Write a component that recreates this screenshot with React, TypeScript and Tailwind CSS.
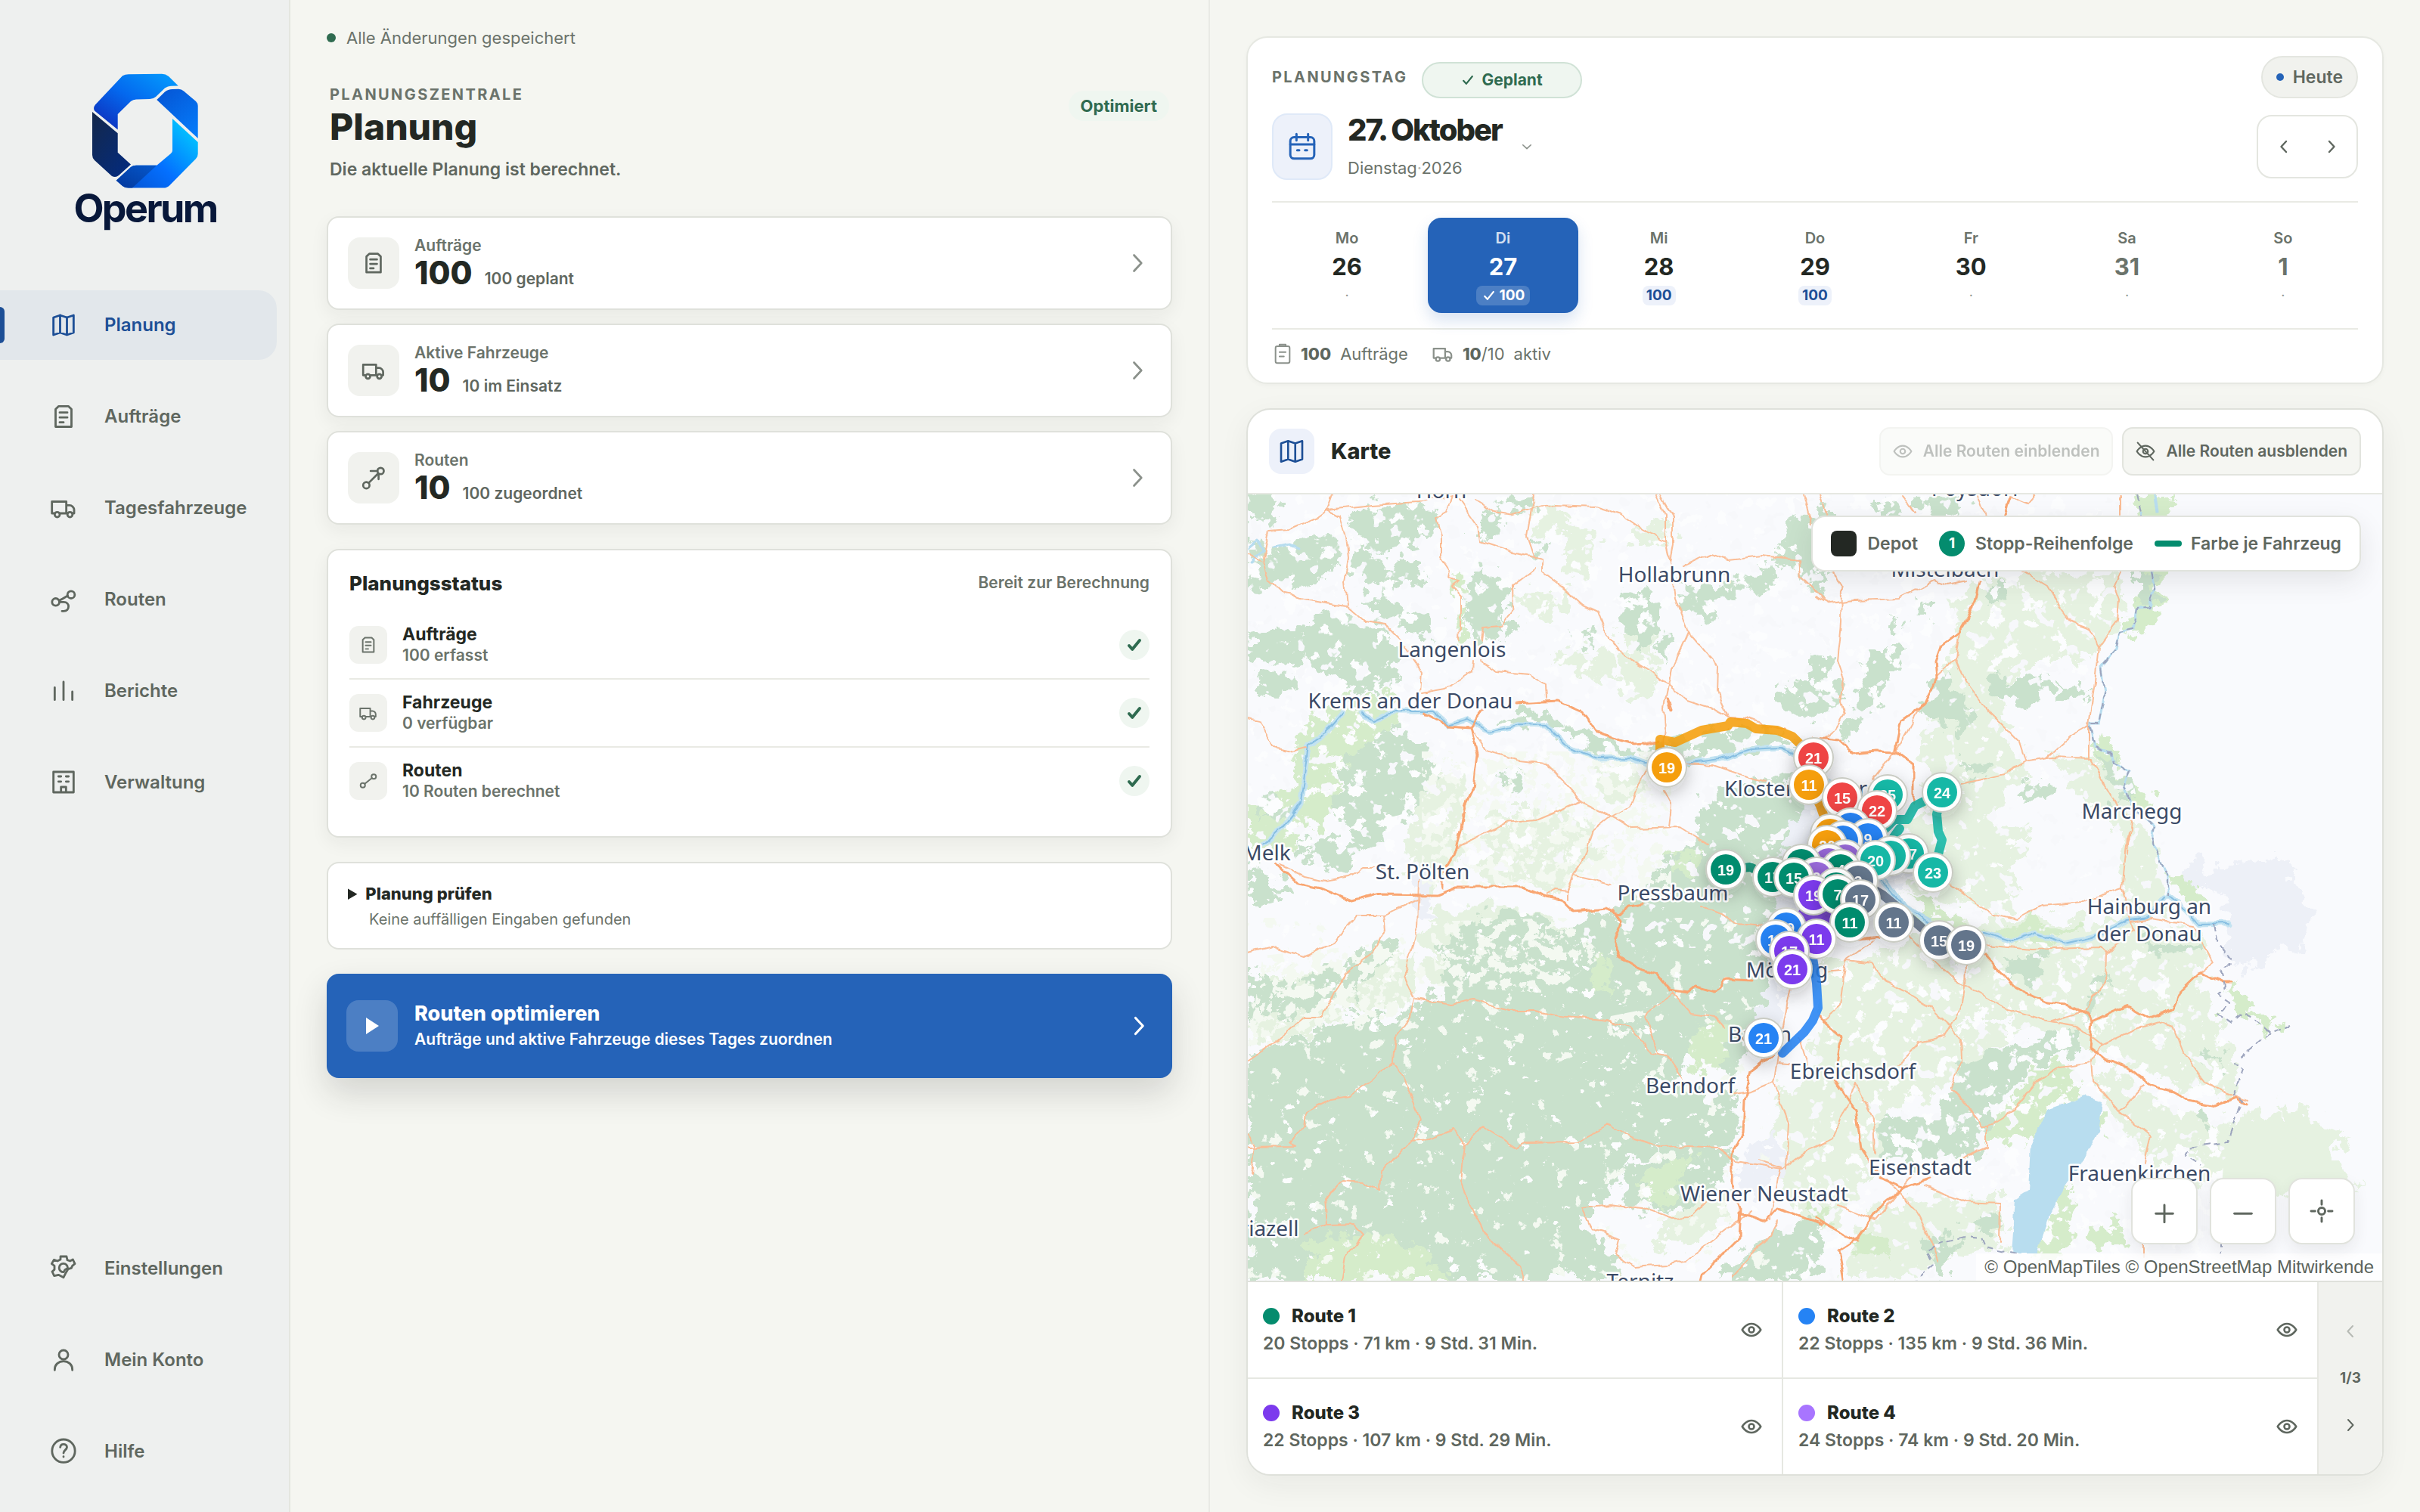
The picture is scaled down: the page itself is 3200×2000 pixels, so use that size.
import { useState } from 'react';
import type { ReactNode } from 'react';

type IconProps = { className?: string; strokeWidth?: number };

function Icon({
  className = 'size-10',
  strokeWidth = 1.7,
  children,
}: IconProps & { children: ReactNode }) {
  return (
    <svg
      viewBox="0 0 24 24"
      className={className}
      fill="none"
      stroke="currentColor"
      strokeWidth={strokeWidth}
      strokeLinecap="round"
      strokeLinejoin="round"
      aria-hidden="true"
    >
      {children}
    </svg>
  );
}

const MapIcon = (props: IconProps) => (
  <Icon {...props}>
    <path d="M4 6 9.3 4.2l5.4 1.8L20 4.2V18l-5.3 1.8L9.3 18 4 19.8zM9.3 4.2V18M14.7 6v13.8" />
  </Icon>
);

const DocIcon = (props: IconProps) => (
  <Icon {...props}>
    <path d="M8.2 3.8h7.6l2.5 2.4v13.9H5.7V6.2zM9 8.8h6M9 12.7h6M9 16.6h3" />
  </Icon>
);

const TruckIcon = (props: IconProps) => (
  <Icon {...props}>
    <path d="M4.8 16.2H2.8V6.9h11.4v9.3H9.2M14.2 9.8h2.6c1.8 0 3.6 1.8 3.6 3.6v2.8h-1M14.8 16.2h-.6" />
    <circle cx="7" cy="17.2" r="2" />
    <circle cx="17.1" cy="17.2" r="2" />
  </Icon>
);

const RoutesIcon = (props: IconProps) => (
  <Icon {...props}>
    <circle cx="5.8" cy="14" r="2.9" />
    <circle cx="18" cy="8.2" r="2.9" />
    <path d="M8.5 12.8c2.8-1.2 4.6-2.4 6.8-3.8M8.8 14h3.4c5 0 5 7.2 0 7.2h-1.4" />
  </Icon>
);

const BarsIcon = (props: IconProps) => (
  <Icon {...props}>
    <path d="M5 19V9.2M12 19V4.8M19 19v-6.4" />
  </Icon>
);

const BuildingIcon = (props: IconProps) => (
  <Icon {...props}>
    <path d="M4 3.6h16v16.2H4zM8 7.2h2M14 7.2h2M8 11.3h2M14 11.3h2M10 19.8v-4.2h4v4.2" />
  </Icon>
);

const GearIcon = (props: IconProps) => (
  <Icon {...props}>
    <path d="M12 19 8 17l-3.4.8L3 14.4l1.8-1.6v-3L2.6 8.2 4.4 5l2.8 1 2.4-1.2v-2.4h4.8l.6 2.8 2.2.8 2.2-1.2L21 8.2l-2 1.6-.8 1.8-2.6.8-2 3.4z" />
    <path d="M15.3 11.4a3.4 3.4 0 1 0-3.3 3.4M15.3 11.6l-2.2 1.4-.9 1.6" />
  </Icon>
);

const UserIcon = (props: IconProps) => (
  <Icon {...props}>
    <circle cx="12" cy="7.8" r="3.6" />
    <path d="M5 20v-.4c0-4 3-6.6 7-6.6s7 2.6 7 6.6v.4" />
  </Icon>
);

const HelpIcon = (props: IconProps) => (
  <Icon {...props}>
    <circle cx="12" cy="11.5" r="9.1" />
    <path d="M9.4 8.6c.2-1.6 1.2-2.4 2.6-2.4s2.7.9 2.7 2.4c0 2-2.7 2.3-2.7 4.6M12 16v.2" />
  </Icon>
);

const RouteTrendIcon = (props: IconProps) => (
  <Icon {...props}>
    <circle cx="5.6" cy="18.6" r="2.8" />
    <circle cx="18.2" cy="6" r="2.8" />
    <path d="M7.6 16.6 16.2 8M9.4 6h6M16.4 8.4v4.8" />
  </Icon>
);

const RouteLineIcon = (props: IconProps) => (
  <Icon {...props}>
    <circle cx="5.8" cy="17" r="2.6" />
    <circle cx="18.2" cy="7" r="2.6" />
    <path d="m8 15.3 8-6.6" />
  </Icon>
);

const CheckIcon = (props: IconProps) => (
  <Icon {...props}>
    <path d="m5 13 4.4 4.8L19 6" />
  </Icon>
);

const EyeIcon = (props: IconProps) => (
  <Icon {...props}>
    <path d="M1.5 12S5.4 5.2 12 5.2 22.5 12 22.5 12 18.6 18.8 12 18.8 1.5 12 1.5 12z" />
    <circle cx="12" cy="12" r="3" />
  </Icon>
);

const EyeOffIcon = (props: IconProps) => (
  <Icon {...props}>
    <path d="M1.5 12S5.4 5.2 12 5.2 22.5 12 22.5 12 18.6 18.8 12 18.8 1.5 12 1.5 12zM2.5 1.5l19 21" />
    <circle cx="12" cy="12" r="3" />
  </Icon>
);

const ChevronRight = (props: IconProps) => (
  <Icon {...props}>
    <path d="m9 5 6.5 7L9 19" />
  </Icon>
);

const ChevronLeft = (props: IconProps) => (
  <Icon {...props}>
    <path d="M15 5 8.5 12l6.5 7" />
  </Icon>
);

const ChevronDown = (props: IconProps) => (
  <Icon {...props}>
    <path d="m5 9 7 6.5L19 9" />
  </Icon>
);

const CalendarIcon = (props: IconProps) => (
  <Icon {...props}>
    <rect x="2.5" y="4.5" width="19" height="17" rx="3" />
    <path d="M2.5 10.2h19M7.4 2v5M16.6 2v5M8 14.8h1.6M14.2 14.8h1.6" />
  </Icon>
);

const ClipboardIcon = (props: IconProps) => (
  <Icon {...props}>
    <rect x="4" y="3.5" width="16" height="19" rx="2" />
    <path d="M8.5 3.5v-2h7v2M8.5 10h7M8.5 15h5" />
  </Icon>
);

const LocateIcon = (props: IconProps) => (
  <Icon {...props}>
    <circle cx="12" cy="12" r="3.4" />
    <path d="M12 1.5v4M12 18.5v4M1.5 12h4M18.5 12h4" />
  </Icon>
);

function Logo() {
  return (
    <div className="flex h-96 flex-col items-center pt-24 pl-0.5">
      <svg viewBox="0 0 144 156" className="h-[156px] w-[144px]" aria-hidden="true">
        <defs>
          <linearGradient id="logoTop" x1="0" y1="1" x2="1" y2="0">
            <stop offset="0" stopColor="#1026b4" />
            <stop offset="0.5" stopColor="#0468ee" />
            <stop offset="1" stopColor="#04a0ff" />
          </linearGradient>
          <linearGradient id="logoRight" x1="0.2" y1="0" x2="0.9" y2="1">
            <stop offset="0" stopColor="#0557d6" />
            <stop offset="1" stopColor="#047cfb" />
          </linearGradient>
          <linearGradient id="logoBottom" x1="0.2" y1="1" x2="1" y2="0.3">
            <stop offset="0" stopColor="#0456d8" />
            <stop offset="0.45" stopColor="#0470ff" />
            <stop offset="1" stopColor="#02c0ff" />
          </linearGradient>
          <linearGradient id="logoFold" x1="0" y1="1" x2="1" y2="0">
            <stop offset="0" stopColor="#03389c" />
            <stop offset="1" stopColor="#0558cc" />
          </linearGradient>
          <linearGradient id="logoLeft" x1="0" y1="0" x2="0.8" y2="1">
            <stop offset="0" stopColor="#14284a" />
            <stop offset="1" stopColor="#042b7c" />
          </linearGradient>
        </defs>
        <path fill="url(#logoTop)" d="M42 4.2Q45.5 2.2 50 2.2L94 1.8Q99 1.8 103 5L115.7 17.4 106 17.8Q102 18 98 20.5L86 32Q83 34.8 78 35L60 35.4Q56 35.6 53 38L35.7 55V75.4L5 50.5Q2.8 46.5 6 42.4z" />
        <path fill="url(#logoRight)" d="M87.3 36 98 25.5Q102 22 108 22L116 21.8Q120 21.8 123 24.5L139 38Q141.7 40.5 141.7 44V87z" />
        <path fill="url(#logoBottom)" d="M108 61 141.7 92V107.5Q141.7 111.5 139 114L104 149.5Q101 152.6 96 152.6H50Q45 152.6 42 150L33.7 142.8 53 125Q56 122.7 60 122.7H87.3L106 107Q108 105.5 108 103z" />
        <path fill="url(#logoFold)" d="M33.7 142.8 53 125Q56 122.7 60 122.7H87.3L55 152.6H50Q45 152.6 42 150z" />
        <path fill="url(#logoLeft)" d="M2 52 35.7 80.3V105.8L53 121.4 37 136Q33 139.5 28 137L5 116Q2 113 2 109z" />
      </svg>
      <p className="text-[52px] leading-[48px] font-bold tracking-tighter text-[#08183a]">Operum</p>
    </div>
  );
}

const mainNav = [
  { label: 'Planung', icon: MapIcon, active: true },
  { label: 'Aufträge', icon: DocIcon },
  { label: 'Tagesfahrzeuge', icon: TruckIcon },
  { label: 'Routen', icon: RoutesIcon },
  { label: 'Berichte', icon: BarsIcon },
  { label: 'Verwaltung', icon: BuildingIcon },
];

const footerNav = [
  { label: 'Einstellungen', icon: GearIcon },
  { label: 'Mein Konto', icon: UserIcon },
  { label: 'Hilfe', icon: HelpIcon },
];

function NavItem({
  label,
  icon: ItemIcon,
  active,
}: {
  label: string;
  icon: (props: IconProps) => ReactNode;
  active?: boolean;
}) {
  return (
    <a
      href={`#${label}`}
      className={`relative mr-4 flex h-[92px] items-center gap-[34px] rounded-r-3xl pl-16 text-2xl font-semibold ${
        active ? 'bg-[#e2e7eb] text-[#1d4f96]' : 'text-[#5f675f]'
      }`}
    >
      {active && <span className="absolute left-0 h-12 w-1.5 rounded-r-md bg-[#1d4f96]" />}
      <ItemIcon />
      {label}
    </a>
  );
}

function Sidebar() {
  return (
    <aside className="flex flex-col border-r-2 border-[#e4e6e0] bg-[#eef0ef] pb-[34px]">
      <Logo />
      <nav className="flex flex-1 flex-col justify-between">
        <div className="flex flex-col gap-[29px]">
          {mainNav.map((item) => (
            <NavItem key={item.label} {...item} />
          ))}
        </div>
        <div className="flex flex-col gap-[29px]">
          {footerNav.map((item) => (
            <NavItem key={item.label} {...item} />
          ))}
        </div>
      </nav>
    </aside>
  );
}

const summaryCards = [
  { title: 'Aufträge', value: '100', note: '100 geplant', icon: DocIcon },
  { title: 'Aktive Fahrzeuge', value: '10', note: '10 im Einsatz', icon: TruckIcon },
  { title: 'Routen', value: '10', note: '100 zugeordnet', icon: RouteTrendIcon },
];

const statusRows = [
  { title: 'Aufträge', note: '100 erfasst', icon: DocIcon },
  { title: 'Fahrzeuge', note: '0 verfügbar', icon: TruckIcon },
  { title: 'Routen', note: '10 Routen berechnet', icon: RouteLineIcon },
];

function PlanningColumn() {
  return (
    <main className="border-r-2 border-[#e9eae5] px-12 pt-8 pb-12">
      <p className="flex h-9 items-center gap-[14px] text-[22px] text-[#6b736b]">
        <span className="size-3 rounded-full bg-[#2f6b50]" />
        Alle Änderungen gespeichert
      </p>

      <header className="mt-[42px] mb-[47px] flex items-start justify-between px-1">
        <div>
          <p className="text-xl leading-[30px] font-bold tracking-[0.12em] text-[#6b736b]">PLANUNGSZENTRALE</p>
          <h1 className="text-5xl leading-[56px] font-extrabold text-[#232823]">Planung</h1>
          <p className="mt-[13px] text-[23px] leading-[30px] font-semibold text-[#5f675f]">
            Die aktuelle Planung ist berechnet.
          </p>
        </div>
        <span className="mt-[10px] flex h-10 items-center rounded-full bg-[#eff6f0] px-4 text-[22px] font-bold text-[#2f6b50]">
          Optimiert
        </span>
      </header>

      <div className="flex flex-col gap-[18px]">
        {summaryCards.map(({ title, value, note, icon: CardIcon }) => (
          <button
            key={title}
            className="flex h-[124px] items-center gap-5 rounded-2xl border-2 border-[#dfe1db] bg-white px-[26px] text-left shadow-[0_8px_24px_rgba(35,40,35,0.06)]"
          >
            <span className="flex size-[68px] items-center justify-center rounded-2xl bg-[#f1f2ee] text-[#5f675f]">
              <CardIcon className="size-9" strokeWidth={1.8} />
            </span>
            <span className="flex-1">
              <span className="block text-[21px] leading-[26px] font-semibold text-[#6b736b]">{title}</span>
              <span className="flex items-baseline gap-4">
                <strong className="text-[42px] leading-[46px] font-extrabold text-[#232823]">{value}</strong>
                <span className="text-[21px] leading-6 font-semibold text-[#5f675f]">{note}</span>
              </span>
            </span>
            <ChevronRight className="size-9 text-[#8b918b]" strokeWidth={1.8} />
          </button>
        ))}
      </div>

      <section className="mt-8 rounded-2xl border-2 border-[#dfe1db] bg-white px-7 pt-[23px] pb-[29px] shadow-[0_8px_24px_rgba(35,40,35,0.06)]">
        <div className="flex h-10 items-center justify-between">
          <h2 className="text-[26px] font-extrabold text-[#232823]">Planungsstatus</h2>
          <span className="text-[21px] font-semibold text-[#6b736b]">Bereit zur Berechnung</span>
        </div>
        <ul className="mt-[18px] divide-y-2 divide-[#e9eae4]">
          {statusRows.map(({ title, note, icon: RowIcon }) => (
            <li key={title} className="flex h-[90px] items-center gap-5 last:h-[88px]">
              <span className="flex size-[50px] items-center justify-center rounded-xl bg-[#f1f2ee] text-[#6b736b]">
                <RowIcon className="size-7" strokeWidth={1.7} />
              </span>
              <div className="flex-1">
                <h3 className="text-[23px] leading-7 font-bold text-[#232823]">{title}</h3>
                <p className="text-[21px] leading-7 font-semibold text-[#6b736b]">{note}</p>
              </div>
              <span className="flex size-10 items-center justify-center rounded-full bg-[#eff6f0] text-[#2f6b50]">
                <CheckIcon className="size-6" strokeWidth={4} />
              </span>
            </li>
          ))}
        </ul>
      </section>

      <details className="mt-8 rounded-2xl border-2 border-[#dfe1db] bg-white px-[26px] pt-[25px] pb-[23px]">
        <summary className="text-[22px] leading-[30px] font-extrabold text-[#232823]">
          Planung prüfen
          <span className="block pt-1 pl-7 text-xl leading-[30px] font-normal text-[#6b736b]">
            Keine auffälligen Eingaben gefunden
          </span>
        </summary>
      </details>

      <button className="mt-8 flex h-[138px] w-full items-center gap-[22px] rounded-2xl bg-[#2563b8] px-[26px] text-left text-white shadow-[0_20px_44px_rgba(35,40,35,0.16)]">
        <span className="flex size-[68px] items-center justify-center rounded-2xl bg-white/18">
          <svg viewBox="0 0 18 22" className="h-[22px] w-[18px]" fill="currentColor" aria-hidden="true">
            <path d="M1 0v22l17-11z" />
          </svg>
        </span>
        <span className="flex-1">
          <span className="block text-[27px] leading-9 font-extrabold">Routen optimieren</span>
          <span className="block text-[21px] leading-8 font-semibold">
            Aufträge und aktive Fahrzeuge dieses Tages zuordnen
          </span>
        </span>
        <ChevronRight className="size-9" strokeWidth={2.1} />
      </button>
    </main>
  );
}

const days = [
  { name: 'Mo', date: 26 },
  { name: 'Di', date: 27, count: 100 },
  { name: 'Mi', date: 28, count: 100 },
  { name: 'Do', date: 29, count: 100 },
  { name: 'Fr', date: 30 },
  { name: 'Sa', date: 31, weekend: true },
  { name: 'So', date: 1, weekend: true },
];

function DayPicker() {
  const [selected, setSelected] = useState(27);

  return (
    <section className="rounded-[28px] border-2 border-[#e6e8e2] bg-white px-8 pt-6 shadow-[0_2px_6px_rgba(35,40,35,0.03)]">
      <div className="flex h-14 items-center">
        <span className="text-xl font-bold tracking-[0.12em] text-[#6b736b]">PLANUNGSTAG</span>
        <span className="ml-[18px] flex h-12 w-[212px] items-center justify-center gap-2 self-end rounded-full border-2 border-[#d0e2d6] bg-[#eff6f0] text-[21px] font-bold text-[#2f6b50]">
          <CheckIcon className="size-5" strokeWidth={2.6} />
          Geplant
        </span>
        <button className="ml-auto flex h-14 items-center gap-3 rounded-full border-2 border-[#e4e6e0] bg-[#f1f2ee] px-[18px] text-[23px] font-semibold text-[#5f675f]">
          <span className="size-[10px] rounded-full bg-[#2563b8]" />
          Heute
        </button>
      </div>

      <div className="mt-5 flex h-[88px] items-center">
        <span className="flex h-[88px] w-20 items-center justify-center rounded-[20px] border-2 border-[#dfe9f8] bg-[#edf1fa] text-[#2563b8]">
          <CalendarIcon className="size-10" strokeWidth={1.8} />
        </span>
        <button className="ml-5 flex items-center gap-6 text-left">
          <span>
            <span className="block text-[40px] leading-[56px] font-extrabold tracking-[-0.05em] text-[#232823]">27. Oktober</span>
            <span className="block text-[22px] leading-[44px] text-[#6b736b]">
              Dienstag<span className="text-[#b9bdb7]">·</span>2026
            </span>
          </span>
          <ChevronDown className="size-[18px] text-[#8b918b]" strokeWidth={2.2} />
        </button>
        <div className="ml-auto flex h-[84px] items-center rounded-[20px] border-2 border-[#e4e6e0] px-0.5 text-[#5f675f]">
          <button aria-label="Vorheriger Tag" className="flex size-[63px] items-center justify-center">
            <ChevronLeft className="size-6" strokeWidth={2.4} />
          </button>
          <button aria-label="Nächster Tag" className="flex size-[63px] items-center justify-center">
            <ChevronRight className="size-6" strokeWidth={2.4} />
          </button>
        </div>
      </div>

      <div className="mt-7 grid grid-cols-7 gap-2 border-y-2 border-[#e9eae4] py-5">
        {days.map((day) => {
          const active = day.date === selected;
          return (
            <button
              key={day.name}
              onClick={() => setSelected(day.date)}
              className={`flex h-[126px] flex-col items-center rounded-[18px] pt-3 ${
                active ? 'bg-[#2563b8] shadow-[0_10px_20px_rgba(37,99,184,0.18)]' : ''
              }`}
            >
              <span className={`text-xl leading-[30px] font-semibold ${active ? 'text-white/80' : 'text-[#6b736b]'}`}>
                {day.name}
              </span>
              <span
                className={`text-[31px] leading-[46px] font-bold ${
                  active ? 'text-white' : day.weekend ? 'text-[#6b736b]' : 'text-[#232823]'
                }`}
              >
                {day.date}
              </span>
              {day.count ? (
                <span
                  className={`mt-0.5 flex h-[26px] items-center gap-1 rounded-lg text-[19px] font-bold ${
                    active ? 'bg-white/18 px-[7px] text-white' : 'bg-[#edf1fa] px-[5px] text-[#1d4f96]'
                  }`}
                >
                  {active && <CheckIcon className="size-5" strokeWidth={2.6} />}
                  {day.count}
                </span>
              ) : (
                <span className="mt-0.5 text-lg leading-[26px] text-[#8b918b]">·</span>
              )}
            </button>
          );
        })}
      </div>

      <div className="flex h-[70px] items-center pb-1.5 text-[22px] text-[#6b736b]">
        <ClipboardIcon className="size-7 text-[#8b918b]" strokeWidth={1.7} />
        <strong className="ml-[10px] font-extrabold text-[#5f675f]">100</strong>
        <span className="ml-3">Aufträge</span>
        <TruckIcon className="ml-[30px] size-8 text-[#8b918b]" strokeWidth={1.7} />
        <span className="ml-[10px]">
          <strong className="font-extrabold text-[#5f675f]">10</strong>/10
        </span>
        <span className="ml-3">aktiv</span>
      </div>
    </section>
  );
}

// Terrain, coordinates in map pixels (1500 x 1040)
const lightFields = [
  '375,10 405,8 425,35 460,60 450,112 420,105 420,50 375,45',
  '510,35 555,33 562,75 510,68',
  '355,136 390,117 425,125 430,163 360,160',
  '490,175 530,170 545,270 495,270',
  '415,200 480,210 495,250 455,245 405,220',
  '944,120 1020,105 1153,100 1155,170 1110,220 1035,220 990,260 1000,310 1035,370 960,440 900,450 890,340 915,240 935,200',
  '850,440 960,420 1030,440 1010,500 1015,550 940,545 880,520',
  '1060,340 1120,350 1170,410 1200,470 1215,560 1150,545 1160,450 1110,420',
  '980,560 1060,560 1160,560 1270,590 1260,640 1290,720 1310,760 1290,800 1200,770 1120,740 1040,700 960,690 900,720 820,760 760,690 750,620 850,600',
  '1130,760 1200,800 1300,830 1290,855 1240,865 1200,900 1170,850 1130,800',
  '1305,830 1340,810 1420,860 1470,905 1440,930 1380,920 1345,950 1280,930 1245,875',
  '1360,805 1450,840 1440,880 1390,860',
  '760,700 900,700 1030,700 950,760 840,820 830,890 790,960 740,980 700,900 720,830',
  '830,940 990,930 1000,1000 920,1010 860,1040 790,1040 800,980',
  '220,380 290,370 285,470 250,525 215,500',
  '320,420 440,420 470,480 400,525 300,505',
  '230,560 330,540 430,570 470,620 410,650 330,625 240,650',
  '30,640 130,620 220,600 215,680 130,680 60,720 0,720',
  '450,360 510,355 530,390 480,410',
  '700,790 740,780 720,850 690,860',
  '600,890 640,940 600,990 540,1000 560,950',
];

const forests = [
  '0,60 30,70 60,55 110,50 120,85 100,110 60,125 30,115 0,130',
  '0,0 25,0 40,30 15,40 0,35',
  '145,15 200,12 240,20 262,35 240,60 200,65 175,75 150,60 135,45',
  '135,75 160,70 180,90 225,85 235,110 200,125 165,120 140,110',
  '305,25 340,20 330,50 305,60',
  '345,12 375,8 370,24 350,26',
  '290,125 310,95 335,110 345,150 330,190 300,200 290,160',
  '150,130 190,135 230,160 245,190 210,180 165,160',
  '0,190 60,175 120,160 190,180 203,240 190,265 140,255 100,230 50,225 0,215',
  '20,240 60,235 55,262 10,268',
  '378,50 402,62 386,85',
  '345,160 360,180 340,192',
  '565,120 640,112 700,90 700,118 650,130 600,165 575,150',
  '690,70 740,25 770,15 770,112 735,120 700,90',
  '500,130 530,125 540,180 520,205 505,180 495,150',
  '545,180 558,190 552,230 542,200',
  '425,180 465,190 460,198 430,195',
  '700,255 760,240 790,250 780,280 740,300 710,280',
  '330,295 365,285 400,290 440,305 465,325 520,337 560,330 620,312 700,310 732,330 700,330 660,333 600,350 550,354 470,343 425,318 380,298 330,305',
  '140,340 190,310 240,330 250,380 220,420 180,450 150,476 130,430 110,400',
  '20,395 55,410 60,440 25,430',
  '330,370 370,375 360,390 335,388',
  '60,470 110,455 150,470 130,500 90,490',
  '0,490 35,500 50,530 20,540 0,530',
  '600,405 650,385 700,372 745,395 750,440 745,520 705,560 690,600 688,660 665,730 645,765 600,740 560,765 470,690 430,610 400,580 490,545 540,500 590,460',
  '0,740 60,720 130,690 215,690 260,650 250,600 300,560 360,550 430,580 500,600 560,660 560,760 600,790 645,800 650,850 600,870 560,860 500,880 470,940 440,960 490,1010 480,1040 0,1040',
  '0,630 60,650 110,620 180,590 200,600 130,670 50,690 0,690',
  '570,850 640,870 620,920 560,950 500,940 490,900',
  '690,985 750,960 770,1000 750,1040 620,1040 650,1010',
  '939,758 969,740 1030,723 1076,705 1107,719 1102,738 1056,742 1025,774 980,810 975,865 928,877 877,885 832,873 834,818 862,829 918,826 928,798',
  '816,205 872,205 847,243 832,278 801,320 791,305 811,259',
  '913,240 960,278 944,312 888,289',
  '975,243 1051,240 1066,266 1025,278 980,259',
  '1066,244 1115,266 1076,268',
  '964,125 1005,113 1013,144 985,140',
  '888,5 944,8 949,30 893,30',
  '830,8 855,5 860,25 840,28',
  '888,144 900,140 895,165 880,165',
  '845,158 870,175 860,182',
  '750,105 772,112 765,130 750,125',
  '750,215 772,210 765,260 750,275',
  '1000,612 1056,606 1051,640 1005,636',
  '1020,380 1060,378 1055,400 1025,410',
  '1178,90 1205,100 1200,145 1178,140',
  '1120,338 1150,360 1170,400 1158,410 1135,370',
  '945,360 975,355 980,370 955,380',
  '1180,590 1250,592 1262,605 1200,608',
  '1095,700 1125,640 1140,640 1115,690',
  '1260,730 1285,735 1290,755 1265,752',
  '1255,805 1280,825 1275,840 1255,825',
  '900,985 940,980 935,1010 915,1035 900,1010',
  '965,950 990,945 985,980 970,980',
];

const parks = [
  '0,410 60,390 65,330 100,275 150,262 190,268 200,290 165,350 120,362 110,420 60,470 0,476',
  '268,100 285,110 290,190 278,200 275,140',
  '600,720 630,690 645,740 620,765 590,755',
  '1056,746 1092,762 1102,798 1056,810 1046,849 975,865 964,841 1005,810',
  '1087,912 1095,960 1082,1006 1042,1006 1056,960',
  '1176,0 1218,0 1217,70 1205,150 1170,190 1155,185 1176,140 1185,60',
  '1120,320 1150,340 1160,380 1205,405 1190,425 1150,390 1118,345',
  '1218,500 1255,500 1265,545 1240,540 1220,520',
  '1303,642 1316,665 1360,699 1350,712 1334,697 1316,687 1301,697 1290,685',
  '870,520 900,535 960,580 1040,565 1110,575 1060,590 980,585 900,575',
  '640,470 700,480 700,540 650,520',
  '1110,970 1150,955 1160,990 1120,1000',
  '790,990 830,975 860,1000 830,1015',
  '750,930 775,940 760,965 740,950',
  '1125,815 1138,820 1130,845 1118,835',
];

// nature reserves that lie on top of the woods
const reserves = [
  '75,1000 110,975 220,988 265,1040 75,1040',
  '550,880 592,868 570,935 520,945 515,915',
  '456,615 482,622 474,662 450,640',
  '592,700 630,690 645,725 615,760 588,752',
  '560,480 600,475 590,500 565,498',
];

const urban = [
  '740,400 800,420 860,440 870,520 820,560 740,600 690,640 690,560 710,470',
  '1230,490 1291,493 1342,478 1378,478 1378,513 1408,553 1393,604 1352,608 1321,628 1291,604 1306,565 1291,529 1240,509',
  '215,500 245,500 240,560 220,550',
  '660,860 700,850 710,900 670,930 650,900',
  '690,650 710,640 700,700 670,740 660,730',
];

const lake =
  'M1056 814 1107 796 1130 804 1125 841 1102 885 1077 920 1056 960 1043 1005H1010L1015 932 1033 920 1036 861 1051 826z';

const rivers = [
  'M0 480 17 467 45 439 70 408 75 370 80 331 102 316 125 289M152 289 165 301 195 287 245 287 265 305 290 297 320 314 360 305 395 306 425 335 462 350 505 349 525 356 580 356 625 350 665 337 705 335 725 345 790 400 820 480 840 513 863 539 900 566 940 580 974 580 1010 592 1041 580 1082 594 1117 586 1163 563 1189 559 1212 533M1217 531 1240 549 1260 569 1298 568',
];

const creeks = [
  'M842 505 870 545 902 562M1199 0 1202 25M1181 25 1199 125 1191 150 1176 151 1171 178 1153 182 1148 205 1128 228 1133 262 1125 303 1113 303 1120 335 1140 341 1143 354 1166 368 1158 385 1168 412 1199 439 1196 461 1201 470 1217 505 1217 531',
  'M0 70 12 60 20 75 5 90M35 70 55 66 70 72',
];

const borders = [
  'M1176 0 1181 25 1199 125 1191 150 1176 151 1171 178 1153 182 1148 205 1128 228 1133 262 1125 303 1113 303 1120 335 1140 341 1143 354 1166 368 1158 385 1168 412 1199 439 1196 461 1201 470 1217 505 1217 531',
  'M1278 569 1283 596 1301 612 1298 624 1288 632 1293 650 1283 661 1298 671 1283 687 1301 699 1316 687 1334 697 1352 712 1378 701M1352 712 1304 752 1316 762 1304 794 1316 802 1306 826 1296 857 1245 864 1241 875 1260 887M1271 930 1286 980 1286 1005',
  'M1015 1005 974 996 969 984 949 982 908 992 898 1003 906 1019 883 1039',
];

const minorRoads = [
  'M112 0 105 20 90 31 55 46 28 48 20 90 28 113 48 132 85 140 130 147 155 169 183 173 200 190 230 234 228 262',
  'M105 20 165 14 225 10 270 2M105 20 122 29 130 56 133 83 128 117 131 146M0 78 20 90',
  'M270 2 262 23 248 31 255 56 255 83 268 102 266 112 280 115 270 122 282 135 282 152 280 194',
  'M280 8 305 44 308 63 350 77 390 86 390 102 415 121 443 146 462 155 472 182 495 211 530 232 555 251 580 272 610 282 634 295',
  'M300 8 325 23 350 27 380 16 405 14 460 16 495 27 520 44 552 62M378 0 369 56 379 85',
  'M380 98 350 121 351 153 335 174 310 176 308 194M308 220 330 234 370 238 395 253 396 270M298 220 297 236 260 257 232 262',
  'M540 0 552 25 552 62 558 88M545 0 562 29 562 67 558 88 565 136 582 182 605 209 622 228 621 259 634 295',
  'M582 182 560 232 550 282 552 310 550 331M575 96 612 79 635 86 680 81 730 86 732 109 762 138',
  'M750 134 770 144 801 140 862 138 908 115 925 120 951 115M735 0 745 40M775 102 786 125 785 171 780 220 788 243 783 274 788 291 775 312 763 322',
  'M865 0 882 25M757 0 766 28M965 0 975 28M1008 3 1030 12 1040 0M1155 0 1155 28',
  'M941 182 936 216 949 247 982 289 1020 327 1028 352M857 337 820 385M935 218 911 240M890 280 857 340',
  'M944 383 1000 370 1031 352 1064 347 1115 349 1133 383 1150 412 1168 431 1164 475 1164 446 1156 521',
  'M1056 348 1087 320 1112 306 1120 247 1125 201 1150 167 1152 140 1145 121 1153 102M1025 102 1056 121 1069 144 1087 169 1112 178 1125 201M1112 306 1112 349',
  'M300 316 315 339 360 352 395 356 415 377 442 408 480 426 510 442 570 440 610 465M275 467 340 435 380 431 440 406',
  'M480 426 505 412 517 381 530 358M480 426 455 446 445 476 432 505 424 522 424 536M550 393 560 412 557 439M432 505 480 516',
  'M580 356 615 358 650 370 685 380M636 295 660 296 680 304 710 312',
  'M0 297 15 300 35 335 60 341 78 336',
  'M45 490 75 505 102 511 135 505 152 494 180 494M227 511 225 572 215 611 207 637 220 666 215 691 195 718 192 749 215 791 228 829 215 856 195 879 177 894 175 921 150 909 125 907 102 932 105 967 75 978',
  'M225 536 180 557 145 557 115 592 75 611 32 598 0 606M180 557 182 576 165 607 130 634 115 657 97 691 75 691 40 722 0 749',
  'M222 666 267 674 300 668 345 683 380 683 405 689 475 697 507 705 532 739 555 743 575 772M562 659 537 676 525 691 542 739M562 659 587 687 617 691 630 706',
  'M192 749 165 775 135 796 110 800 77 817 75 837 57 858 62 862 0 863M0 845 10 860 5 900',
  'M215 854 240 852 272 840 287 862 282 909 295 944 310 975 335 998 360 1021 365 1040M287 862 310 836 355 864 367 858 435 857 477 833 510 852 547 864 585 862 620 864 645 883 707 892 735 871 764 858',
  'M105 967 140 966 152 979 130 1009 125 1040M442 944 480 940 530 946 562 957 585 956 605 936M442 944 455 971 492 986 487 1007 510 1022 555 1019 580 1013 665 948',
  'M600 545 625 555 645 568 680 571M395 532 405 522 424 524M640 795 665 790 695 778 705 720 720 640',
  'M929 515 959 537 987 555 1018 562 1051 544 1102 539 1156 521 1171 576 1135 606 1134 644 1115 667 1107 683 1061 697',
  'M974 596 1036 602 1128 599 1135 606M1168 565 1194 561 1250 569 1276 620 1260 632',
  'M875 584 934 644 954 652 1000 679 1061 697 1097 703 1130 728 1115 750 1117 774 1153 816 1194 849 1186 883M1153 816 1184 781',
  'M1130 728 1173 707 1209 697 1224 705 1237 739 1265 778 1321 802',
  'M949 620 948 652 944 679 929 703 921 717 888 725 860 754M929 703 943 723 944 748 929 786 954 810 969 836 977 836 1010 816 1041 778 1074 758 1115 752M977 836 977 863 946 877',
  'M827 590 791 616 827 620 842 644 878 663 903 679 929 703M791 616 783 675 760 695M760 632 785 630',
  'M804 778 827 826 829 873M804 778 788 818 773 853 750 865M695 778 715 830 712 892M675 880 705 890 690 960',
  'M895 915 918 924 949 936 995 938 994 988M845 905 883 948 903 988 913 1015M780 940 830 960 880 900',
  'M640 1035 690 980 700 960M1184 992V1010',
  'M550 331 550 345M702 752 740 755 730 720',
];

const majorRoads = [
  'M967 113 959 151 941 182 916 201 909 220 911 243 895 278 865 299 857 337M1008 5 1000 28',
  'M750 322 781 325 801 343 830 340 857 341 880 358 880 408M355 276 410 273 442 287 462 316 510 330 545 327',
  'M233 289 265 306 295 308 303 343 298 389 287 412 282 442 272 476 257 500 257 520M312 285 295 308',
  'M38 488 67 515 97 521 137 538 175 528 250 529 275 519 365 519 395 532 415 536 432 553 472 549 492 555 502 545 522 542',
  'M485 551 493 565 484 588 492 612 515 626 540 634 557 655 582 659 592 651 617 658 632 641 665 643',
  'M695 741 665 764 657 802 655 844 640 875 640 910 652 944 650 982 600 1032 598 1040',
  'M974 608 1015 652 1056 672 1082 675 1112 687 1116 697 1113 731 1133 748 1163 758 1194 782 1224 790 1245 802 1278 809 1306 798 1320 807',
  'M1116 697 1133 689 1163 677 1191 693 1224 681 1235 656 1260 632 1291 645 1301 645',
  'M755 691 785 717 775 774 804 814 811 865 837 903 867 917 903 905M867 917 834 944 806 984 781 1000 788 1039M750 956 806 988',
  'M650 950 685 962 700 945 760 965M790 590 835 585M555 270 560 285',
];

const places = [
  { name: 'Horn', x: 256, y: 5 },
  { name: 'Poysdorf', x: 962, y: 2 },
  { name: 'Mistelbach', x: 922, y: 109 },
  { name: 'Hollabrunn', x: 564, y: 116 },
  { name: 'Langenlois', x: 270, y: 215 },
  { name: 'Krems an der Donau', x: 215, y: 283 },
  { name: 'Klosterneuburg', x: 733, y: 399 },
  { name: 'Marchegg', x: 1169, y: 429 },
  { name: 'Melk', x: 25, y: 484 },
  { name: 'St. Pölten', x: 231, y: 509 },
  { name: 'Pressbaum', x: 562, y: 537 },
  { name: 'Hainburg an', x: 1192, y: 555 },
  { name: 'der Donau', x: 1192, y: 591 },
  { name: 'Mödling', x: 713, y: 639 },
  { name: 'Baden', x: 677, y: 724 },
  { name: 'Ebreichsdorf', x: 800, y: 773 },
  { name: 'Berndorf', x: 585, y: 792 },
  { name: 'Eisenstadt', x: 889, y: 900 },
  { name: 'Frauenkirchen', x: 1179, y: 908 },
  { name: 'Wiener Neustadt', x: 683, y: 935 },
  { name: 'Mariazell', x: 8, y: 981 },
  { name: 'Ternitz', x: 519, y: 1051 },
];

const GREEN = '#048c6e';
const BLUE = '#2583f4';
const VIOLET = '#7c3aed';
const LILAC = '#9a6adb';
const ORANGE = '#f59e0b';
const RED = '#ef4444';
const TEAL = '#14b8a6';
const SLATE = '#64748b';

const tracks = [
  { color: ORANGE, d: 'M545 340V324L565 328 600 312 635 306 638 301 660 303 672 310 700 312 720 320 733 333 748 348M742 384 757 412 770 449' },
  { color: TEAL, d: 'M918 394 882 412 872 430 855 430 835 450 830 484M832 484 862 442M918 394 911 423 913 446 918 457 913 476 906 500' },
  { color: GREEN, d: 'M632 496 664 493 694 506 722 507 780 529 796 566' },
  { color: SLATE, d: 'M807 511 840 530 870 555 892 574 914 590' },
  { color: VIOLET, d: 'M748 530 730 560 752 560 775 555 752 588' },
  { color: BLUE, d: 'M745 600 752 646 754 679 747 696 736 711 707 739' },
];

const stops = [
  { n: 21, x: 748, y: 348, color: RED },
  { n: 19, x: 554, y: 361, color: ORANGE },
  { n: 11, x: 742, y: 384, color: ORANGE },
  { n: 24, x: 918, y: 394, color: TEAL },
  { n: 25, x: 846, y: 397, color: TEAL },
  { n: 15, x: 786, y: 401, color: RED },
  { n: 22, x: 832, y: 418, color: RED },
  { n: 5, x: 797, y: 441, color: BLUE },
  { n: 3, x: 770, y: 449, color: ORANGE },
  { n: 9, x: 820, y: 455, color: BLUE },
  { n: 1, x: 787, y: 458, color: BLUE },
  { n: 20, x: 766, y: 464, color: ORANGE },
  { n: 17, x: 874, y: 475, color: TEAL },
  { n: 1, x: 850, y: 478, color: TEAL },
  { n: 8, x: 790, y: 483, color: LILAC },
  { n: 20, x: 830, y: 484, color: TEAL },
  { n: 6, x: 768, y: 488, color: LILAC },
  { n: 3, x: 732, y: 489, color: GREEN },
  { n: 4, x: 784, y: 496, color: GREEN },
  { n: 19, x: 632, y: 496, color: GREEN },
  { n: 23, x: 906, y: 500, color: TEAL },
  { n: 2, x: 752, y: 506, color: LILAC },
  { n: 17, x: 694, y: 506, color: GREEN },
  { n: 15, x: 722, y: 507, color: GREEN },
  { n: 3, x: 807, y: 511, color: SLATE },
  { n: 5, x: 778, y: 520, color: GREEN },
  { n: 19, x: 748, y: 530, color: VIOLET },
  { n: 7, x: 780, y: 529, color: GREEN },
  { n: 17, x: 810, y: 536, color: SLATE },
  { n: 11, x: 796, y: 566, color: GREEN },
  { n: 11, x: 854, y: 566, color: SLATE },
  { n: 19, x: 712, y: 573, color: BLUE },
  { n: 11, x: 752, y: 588, color: VIOLET },
  { n: 17, x: 698, y: 589, color: BLUE },
  { n: 15, x: 914, y: 590, color: SLATE },
  { n: 19, x: 950, y: 596, color: SLATE },
  { n: 17, x: 716, y: 604, color: VIOLET },
  { n: 21, x: 720, y: 628, color: VIOLET },
  { n: 21, x: 682, y: 719, color: BLUE },
];

function RouteMap() {
  return (
    <svg
      viewBox="0 0 1500 1040"
      preserveAspectRatio="xMidYMid slice"
      className="absolute inset-0 size-full bg-[#f9fafd]"
      role="img"
      aria-label="Karte mit Routen und Stopps"
    >
      <defs>
        {/* frays polygon outlines so woods and fields look surveyed */}
        <filter id="fray" x="0" y="0" width="1500" height="1040" filterUnits="userSpaceOnUse">
          <feTurbulence type="fractalNoise" baseFrequency="0.045" numOctaves="5" seed="4" result="noise" />
          <feDisplacementMap in="SourceGraphic" in2="noise" scale="50" xChannelSelector="R" yChannelSelector="G" />
        </filter>
        <filter id="wobble" x="0" y="0" width="1500" height="1040" filterUnits="userSpaceOnUse">
          <feTurbulence type="fractalNoise" baseFrequency="0.05" numOctaves="2" seed="9" result="noise" />
          <feDisplacementMap in="SourceGraphic" in2="noise" scale="9" xChannelSelector="R" yChannelSelector="G" />
        </filter>
        {/* each one keeps only the peaks of its noise */}
        <filter id="clearings" x="0" y="0" width="1500" height="1040" filterUnits="userSpaceOnUse">
          <feTurbulence type="fractalNoise" baseFrequency="0.045" numOctaves="6" seed="21" />
          <feColorMatrix values="0 0 0 0 0.976  0 0 0 0 0.98  0 0 0 0 0.992  30 0 0 0 -18.6" result="spots" />
          <feComposite in="spots" in2="SourceGraphic" operator="in" />
        </filter>
        <filter id="glades" x="0" y="0" width="1500" height="1040" filterUnits="userSpaceOnUse">
          <feTurbulence type="fractalNoise" baseFrequency="0.05 0.06" numOctaves="6" seed="7" />
          <feColorMatrix values="0 0 0 0 0.976  0 0 0 0 0.98  0 0 0 0 0.992  30 0 0 0 -21.4" result="spots" />
          <feComposite in="spots" in2="SourceGraphic" operator="in" />
        </filter>
        <filter id="meadows" x="0" y="0" width="1500" height="1040" filterUnits="userSpaceOnUse">
          <feTurbulence type="fractalNoise" baseFrequency="0.045" numOctaves="6" seed="33" />
          <feColorMatrix values="0 0 0 0 0.902  0 0 0 0 0.949  0 0 0 0 0.882  0 30 0 0 -20.4" result="spots" />
          <feComposite in="spots" in2="SourceGraphic" operator="in" />
        </filter>
        <filter id="mosaic" x="0" y="0" width="1500" height="1040" filterUnits="userSpaceOnUse">
          <feTurbulence type="fractalNoise" baseFrequency="0.06" numOctaves="5" seed="52" />
          <feColorMatrix values="0 0 0 0 0.902  0 0 0 0 0.949  0 0 0 0 0.882  0 30 0 0 -15.6" result="spots" />
          <feComposite in="spots" in2="SourceGraphic" operator="in" />
        </filter>
        <filter id="hamlets" x="0" y="0" width="1500" height="1040" filterUnits="userSpaceOnUse">
          <feTurbulence type="fractalNoise" baseFrequency="0.05" numOctaves="3" seed="12" />
          <feColorMatrix values="0 0 0 0 0.929  0 0 0 0 0.941  0 0 0 0 0.969  0 0 30 0 -19.4" result="spots" />
          <feComposite in="spots" in2="SourceGraphic" operator="in" />
        </filter>
        <filter id="pinShadow" x="-100%" y="-100%" width="300%" height="320%">
          <feDropShadow dx="0" dy="8" stdDeviation="11" floodColor="#232823" floodOpacity="0.24" />
        </filter>
      </defs>

      <g filter="url(#fray)">
        {lightFields.map((points) => (
          <polygon key={points} points={points} fill="#e6f2e1" />
        ))}
        {parks.map((points) => (
          <polygon key={points} points={points} fill="#d5ecca" />
        ))}
        {forests.map((points) => (
          <polygon key={points} points={points} fill="#c9e1cc" />
        ))}
        {reserves.map((points) => (
          <polygon key={points} points={points} fill="#d5ecca" />
        ))}
        {urban.map((points) => (
          <polygon key={points} points={points} fill="#edf0f7" />
        ))}
      </g>
      <path d="M0 560H690V1040H0z" filter="url(#meadows)" />
      <path d="M240 565 420 560 470 610 400 660 250 650zM20 610 210 590 200 690 0 730zM480 690 530 680 520 720 470 720zM230 340H560V520H230z" filter="url(#mosaic)" />
      <path d="M0 0H1170L1120 240 870 230 800 350H560L420 500H0V300L60 260 0 150zM760 600 1000 590 1210 600 1300 730 1280 1040H1100L1000 930 830 930 760 1040H700L760 780z" filter="url(#clearings)" />
      <path d="M420 500 560 350H900L1140 240 1210 560 830 560 690 640 700 1040H0V500z" filter="url(#glades)" />
      <path d="M0 0H1170L1120 300 1210 450 1300 800 1280 1040H700V600H440V500H0z" filter="url(#hamlets)" />
      <path d={lake} fill="#b8ddef" filter="url(#wobble)" />

      <g fill="none" strokeLinejoin="round" strokeLinecap="round" filter="url(#wobble)">
        {rivers.map((d) => (
          <g key={d}>
            <path d={d} stroke="#c3e3f1" strokeWidth="7" />
            <path d={d} stroke="#88bfe2" strokeWidth="2" />
          </g>
        ))}
        {creeks.map((d) => (
          <path key={d} d={d} stroke="#b8ddef" strokeWidth="3" />
        ))}
        {minorRoads.map((d) => (
          <path key={d} d={d} stroke="#fabd96" strokeWidth="2" />
        ))}
        {majorRoads.map((d) => (
          <path key={d} d={d} stroke="#f9a672" strokeWidth="3" />
        ))}
        {borders.map((d) => (
          <path key={d} d={d} stroke="#9ca4bd" strokeWidth="2" strokeDasharray="9 6" strokeLinecap="butt" />
        ))}
      </g>

      <g
        fontFamily="'Noto Sans', sans-serif"
        fontSize="28"
        textAnchor="middle"
        fill="#3b4a66"
        stroke="#fff"
        strokeWidth="5"
        strokeLinejoin="round"
        paintOrder="stroke"
      >
        {places.map(({ name, x, y }) => (
          <text key={name} x={x} y={y}>
            {name}
          </text>
        ))}
      </g>

      <g fill="none" strokeWidth="12" strokeLinejoin="round" strokeLinecap="round" opacity="0.88">
        {tracks.map(({ color, d }) => (
          <path key={color} d={d} stroke={color} />
        ))}
      </g>

      <g fontFamily="'Liberation Sans', Arial, sans-serif" fontSize="20" fontWeight="700" textAnchor="middle">
        {stops.map(({ n, x, y, color }) => (
          <g key={`${x}-${y}`} filter="url(#pinShadow)">
            <circle cx={x} cy={y} r="26" fill="#fff" stroke="#c9cbc3" strokeWidth="2" />
            <circle cx={x} cy={y} r="20" fill={color} />
            <text x={x} y={y + 8} fill="#fff">
              {n}
            </text>
          </g>
        ))}
      </g>
    </svg>
  );
}

const routes = [
  { name: 'Route 1', info: '20 Stopps · 71 km · 9 Std. 31 Min.', dot: 'bg-[#048c6e]' },
  { name: 'Route 2', info: '22 Stopps · 135 km · 9 Std. 36 Min.', dot: 'bg-[#2583f4]' },
  { name: 'Route 3', info: '22 Stopps · 107 km · 9 Std. 29 Min.', dot: 'bg-[#7c3aed]' },
  { name: 'Route 4', info: '24 Stopps · 74 km · 9 Std. 20 Min.', dot: 'bg-[#a875ff]' },
];

const mapButton =
  'flex size-[88px] items-center justify-center rounded-[18px] border-2 border-[#e1e3dd] bg-white text-[#5f675f] shadow-[0_8px_20px_rgba(35,40,35,0.08)]';

function MapPanel() {
  return (
    <section className="flex flex-1 flex-col overflow-hidden rounded-[32px] border-2 border-[#dfe1db] bg-white shadow-[0_12px_40px_rgba(35,40,35,0.06)]">
      <div className="flex h-28 items-center gap-3 border-b-2 border-[#e6e8e2] px-7">
        <span className="flex size-[60px] items-center justify-center rounded-2xl bg-[#edf1fa] text-[#1d4f96]">
          <MapIcon className="size-[42px]" strokeWidth={1.5} />
        </span>
        <h2 className="mr-auto ml-[10px] text-[29px] font-extrabold text-[#232823]">Karte</h2>
        <button
          disabled
          className="flex h-16 items-center gap-[14px] rounded-[14px] border-2 border-[#e2e4de] bg-[#f5f6f2] px-4 text-[21px] font-semibold text-[#5f675f] opacity-40"
        >
          <EyeIcon className="size-[26px]" strokeWidth={2} />
          Alle Routen einblenden
        </button>
        <button className="flex h-16 items-center gap-[14px] rounded-[14px] border-2 border-[#e2e4de] bg-[#f5f6f2] px-4 text-[21px] font-semibold text-[#5f675f]">
          <EyeOffIcon className="size-[26px]" strokeWidth={2} />
          Alle Routen ausblenden
        </button>
      </div>

      <div className="relative min-h-[600px] flex-1 overflow-hidden">
        <RouteMap />
        <div className="absolute top-7 right-7 flex h-[74px] items-center gap-7 rounded-[18px] border-2 border-[#e1e3dd] bg-white px-6 text-[23px] font-semibold text-[#5f675f] shadow-[0_12px_36px_rgba(35,40,35,0.1)]">
          <span className="flex items-center gap-[14px]">
            <span className="size-[34px] rounded-lg bg-[#232823]" />
            Depot
          </span>
          <span className="flex items-center gap-[14px]">
            <span className="flex size-[34px] items-center justify-center rounded-full bg-[#048c6e] text-[19px] font-bold text-white">
              1
            </span>
            Stopp-Reihenfolge
          </span>
          <span className="flex items-center gap-3">
            <span className="h-2 w-9 rounded-full bg-[#048c6e]" />
            Farbe je Fahrzeug
          </span>
        </div>
        <p className="absolute right-0 bottom-0 bg-white/85 px-[11px] font-['Liberation_Sans',Arial,sans-serif] text-2xl leading-9 text-[#5b635c]">
          © OpenMapTiles © OpenStreetMap Mitwirkende
        </p>
        <div className="absolute right-9 bottom-12 flex gap-4">
          <button aria-label="Vergrößern" className={mapButton}>
            <Icon className="size-8" strokeWidth={2.2}>
              <path d="M12 6v17M3.5 14.5h17" />
            </Icon>
          </button>
          <button aria-label="Verkleinern" className={mapButton}>
            <Icon className="size-8" strokeWidth={2.2}>
              <path d="M3.5 14.5h17" />
            </Icon>
          </button>
          <button aria-label="Zentrieren" className={mapButton}>
            <LocateIcon className="size-8" strokeWidth={2.2} />
          </button>
        </div>
      </div>

      <div className="flex border-t-2 border-[#dfe1db]">
        <ul className="grid flex-1 grid-cols-2 gap-0.5 bg-[#e6e8e2]">
          {routes.map((route) => (
            <li key={route.name} className="flex h-[126px] items-center justify-between bg-white pr-4 pl-5">
              <div>
                <h3 className="flex items-center gap-4 text-2xl leading-9 font-extrabold text-[#232823]">
                  <span className={`size-[22px] rounded-full ${route.dot}`} />
                  {route.name}
                </h3>
                <p className="text-[23px] leading-9 font-semibold text-[#5f675f]">{route.info}</p>
              </div>
              <button aria-label={`${route.name} ausblenden`} className="flex size-12 items-center justify-center text-[#5f675f]">
                <EyeIcon className="size-7" strokeWidth={2.2} />
              </button>
            </li>
          ))}
        </ul>
        <div className="flex w-[86px] flex-col items-center justify-center gap-5 border-l-2 border-[#e6e8e2] bg-[#f1f2ee] text-[#5f675f]">
          <button aria-label="Vorherige Routen" disabled className="opacity-40">
            <ChevronLeft className="size-6" strokeWidth={2} />
          </button>
          <span className="text-[19px] leading-[60px] font-bold">1/3</span>
          <button aria-label="Nächste Routen">
            <ChevronRight className="size-6" strokeWidth={2} />
          </button>
        </div>
      </div>
    </section>
  );
}

export default function App() {
  return (
    <div className="grid min-h-screen grid-cols-[384px_38fr_50fr] bg-[#f5f6f1] font-['Inter',sans-serif]">
      <Sidebar />
      <PlanningColumn />
      <div className="flex flex-col gap-8 p-12">
        <DayPicker />
        <MapPanel />
      </div>
    </div>
  );
}
